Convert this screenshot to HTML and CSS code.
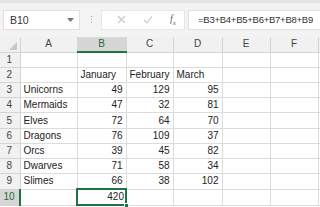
FILE: index.html
```html
<!DOCTYPE html>
<html lang="en">
<head>
    <meta charset="UTF-8">
    <title>Sheet1</title>
    <link rel="stylesheet" href="styles.css">
</head>
<body>
    <div class="top-edge"></div>
    <div class="formula-bar">
        <div class="name-box">
            <span>B10</span>
            <svg class="caret" width="7" height="4" viewBox="0 0 7 4"><path d="M0 0h7L3.5 4z" fill="#777"/></svg>
        </div>
        <div class="grip"><i></i><i></i><i></i></div>
        <div class="actions">
            <svg width="9" height="9" viewBox="0 0 9 9"><path d="M1 1l7 7M8 1L1 8" stroke="#c8c8c8" stroke-width="1.1"/></svg>
            <svg width="10" height="9" viewBox="0 0 10 9"><path d="M1 5l3 3 5-7" stroke="#c8c8c8" stroke-width="1.1" fill="none"/></svg>
            <span class="fx">f<sub>x</sub></span>
        </div>
        <div class="formula">=B3+B4+B5+B6+B7+B8+B9</div>
    </div>

    <table class="sheet">
        <colgroup>
            <col style="width:20px"><col style="width:57px"><col style="width:49px"><col style="width:47px">
            <col style="width:49px"><col style="width:48px"><col style="width:48px"><col style="width:2px">
        </colgroup>
        <tr class="col-heads">
            <th class="corner"><svg width="8" height="8" viewBox="0 0 8 8"><path d="M8 0v8H0z" fill="#c9c9c9"/></svg></th>
            <th>A</th><th class="active">B</th><th>C</th><th>D</th><th>E</th><th>F</th><th></th>
        </tr>
        <tr><th>1</th><td></td><td></td><td></td><td></td><td></td><td></td><td></td></tr>
        <tr><th>2</th><td></td><td>January</td><td>February</td><td>March</td><td></td><td></td><td></td></tr>
        <tr><th>3</th><td>Unicorns</td><td class="num">49</td><td class="num">129</td><td class="num">95</td><td></td><td></td><td></td></tr>
        <tr><th>4</th><td>Mermaids</td><td class="num">47</td><td class="num">32</td><td class="num">81</td><td></td><td></td><td></td></tr>
        <tr><th>5</th><td>Elves</td><td class="num">72</td><td class="num">64</td><td class="num">70</td><td></td><td></td><td></td></tr>
        <tr><th>6</th><td>Dragons</td><td class="num">76</td><td class="num">109</td><td class="num">37</td><td></td><td></td><td></td></tr>
        <tr><th>7</th><td>Orcs</td><td class="num">39</td><td class="num">45</td><td class="num">82</td><td></td><td></td><td></td></tr>
        <tr><th>8</th><td>Dwarves</td><td class="num">71</td><td class="num">58</td><td class="num">34</td><td></td><td></td><td></td></tr>
        <tr><th>9</th><td>Slimes</td><td class="num">66</td><td class="num">38</td><td class="num">102</td><td></td><td></td><td></td></tr>
        <tr><th class="active">10</th><td></td><td class="num selected">420<span class="handle"></span></td><td></td><td></td><td></td><td></td><td></td></tr>
    </table>
</body>
</html>
```

FILE: styles.css
```css
html, body {
    margin: 0;
    padding: 0;
    overflow: hidden;
    background: #fff;
}

body {
    width: 320px;
    height: 207px;
    font-family: 'Liberation Sans', Arial, sans-serif;
    font-size: 10px;
    color: #222;
}

.top-edge {
    height: 3px;
    background: #e4e4e4;
}

/* formula bar */
.formula-bar {
    display: flex;
    align-items: center;
    height: 34px;
    padding-left: 3px;
    padding-bottom: 1px;
    background: #f3f3f3;
    box-sizing: border-box;
}

.name-box {
    display: flex;
    align-items: center;
    justify-content: space-between;
    width: 77px;
    height: 20px;
    box-sizing: border-box;
    padding: 0 5px 0 6px;
    background: #fff;
    border: 1px solid #e0e0e0;
    font-size: 10.5px;
    color: #333;
}

.grip {
    display: flex;
    flex-direction: column;
    gap: 2px;
    margin: 0 9px 0 11px;
}

.grip i {
    display: block;
    width: 1px;
    height: 1px;
    background: #a8a8a8;
}

.actions {
    display: flex;
    align-items: center;
    width: 84px;
    height: 20px;
    box-sizing: border-box;
    padding-left: 15px;
    gap: 17px;
    background: #fff;
    border: 1px solid #e6e6e6;
}

.fx {
    font-family: 'Liberation Serif', serif;
    font-style: italic;
    font-size: 10px;
    color: #666;
}

.fx sub {
    font-size: 7px;
}

.formula {
    flex: 1;
    height: 20px;
    line-height: 18px;
    margin-left: 3px;
    padding-left: 9px;
    box-sizing: border-box;
    background: #fff;
    border: 1px solid #e0e0e0;
    border-right: none;
    font-size: 9.5px;
    letter-spacing: -0.25px;
    color: #333;
    white-space: nowrap;
    overflow: hidden;
}

/* grid */
.sheet {
    border-collapse: collapse;
    table-layout: fixed;
    width: 320px;
}

.sheet tr {
    height: 15.2px;
}

.sheet th,
.sheet td {
    padding: 0 3px;
    height: 15.2px;
    line-height: 14px;
    border-right: 1px solid #dcdcdc;
    border-bottom: 1px solid #dcdcdc;
    white-space: nowrap;
    overflow: visible;
    box-sizing: border-box;
}

.sheet th {
    font-weight: normal;
    color: #444;
    background: #f1f1f1;
    border-color: #d4d4d4;
    text-align: center;
}

.col-heads th {
    height: 15px;
}

.sheet tr > th:first-child {
    padding: 0 1px 0 0;
}

.sheet tr > :last-child {
    padding: 0;
    border-right: none;
}

.col-heads th.corner {
    text-align: right;
    vertical-align: bottom;
}

.corner svg {
    display: block;
    margin: 0 2px 2px auto;
}

.sheet th.active {
    background: #d6d6d6;
    color: #1e6b3f;
}

.col-heads th.active {
    border-bottom: 2px solid #217346;
}

.sheet tr > th.active:first-child {
    border-right: 2px solid #217346;
}

.num {
    text-align: right;
}

.sheet td.selected {
    position: relative;
    border: 2px solid #217346;
    padding-right: 1px;
}

.handle {
    position: absolute;
    right: -4px;
    bottom: -4px;
    width: 5px;
    height: 5px;
    background: #217346;
    border: 1px solid #fff;
    box-sizing: border-box;
}
```
